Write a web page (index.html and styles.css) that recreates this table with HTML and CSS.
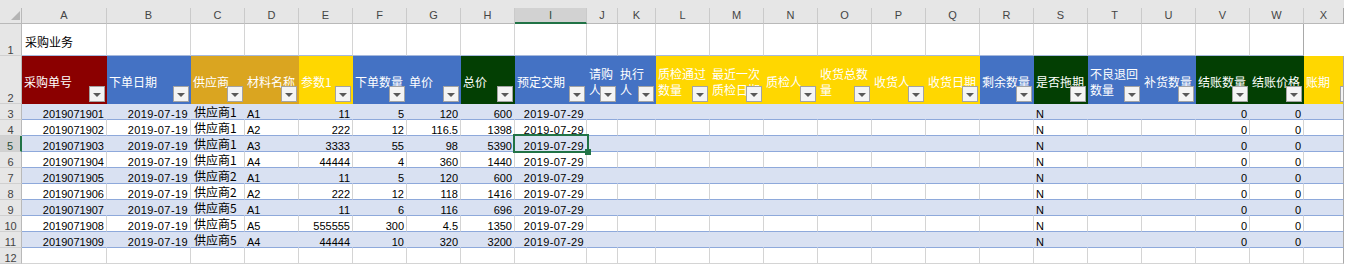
FILE: index.html
```html
<!DOCTYPE html>
<html lang="zh-CN">
<head>
<meta charset="utf-8">
<title>采购业务</title>
<link rel="stylesheet" href="styles.css">
</head>
<body>
<div class="sheet">
  <div class="row colhead">
    <div class="ch corner"></div>
    <div class="ch">A</div><div class="ch">B</div><div class="ch">C</div><div class="ch">D</div><div class="ch">E</div><div class="ch">F</div><div class="ch">G</div><div class="ch">H</div><div class="ch on">I</div><div class="ch">J</div><div class="ch">K</div><div class="ch">L</div><div class="ch">M</div><div class="ch">N</div><div class="ch">O</div><div class="ch">P</div><div class="ch">Q</div><div class="ch">R</div><div class="ch">S</div><div class="ch">T</div><div class="ch">U</div><div class="ch">V</div><div class="ch">W</div><div class="ch">X</div>
  </div>

  <div class="row r1">
    <div class="rh">1</div>
    <div class="c title">采购业务</div>
    <div class="c"></div><div class="c"></div><div class="c"></div><div class="c"></div><div class="c"></div><div class="c"></div><div class="c"></div><div class="c"></div><div class="c"></div><div class="c"></div><div class="c"></div><div class="c"></div><div class="c"></div><div class="c"></div><div class="c"></div><div class="c"></div><div class="c"></div><div class="c"></div><div class="c"></div><div class="c"></div><div class="c"></div><div class="c"></div>
  </div>

  <div class="row r2">
    <div class="rh">2</div>
    <div class="h red">采购单号<span class="fb"></span></div>
    <div class="h blue">下单日期<span class="fb"></span></div>
    <div class="h gold">供应商<span class="fb"></span></div>
    <div class="h gold">材料名称<span class="fb"></span></div>
    <div class="h yel">参数1<span class="fb"></span></div>
    <div class="h blue">下单数量<span class="fb"></span></div>
    <div class="h blue">单价<span class="fb"></span></div>
    <div class="h grn">总价<span class="fb"></span></div>
    <div class="h blue">预定交期<span class="fb"></span></div>
    <div class="h blue wrap">请购人<span class="fb"></span></div>
    <div class="h blue wrap">执行人<span class="fb"></span></div>
    <div class="h yel wrap">质检通过数量<span class="fb"></span></div>
    <div class="h yel wrap">最近一次质检日期<span class="fb"></span></div>
    <div class="h yel">质检人<span class="fb"></span></div>
    <div class="h yel wrap">收货总数量<span class="fb"></span></div>
    <div class="h yel">收货人<span class="fb"></span></div>
    <div class="h yel">收货日期<span class="fb"></span></div>
    <div class="h blue">剩余数量<span class="fb"></span></div>
    <div class="h grn">是否拖期<span class="fb"></span></div>
    <div class="h blue wrap">不良退回数量<span class="fb"></span></div>
    <div class="h blue">补货数量<span class="fb"></span></div>
    <div class="h grn">结账数量<span class="fb"></span></div>
    <div class="h grn">结账价格<span class="fb"></span></div>
    <div class="h yel">账期<span class="fb cut"></span></div>
  </div>

  <div class="row data band">
    <div class="rh">3</div>
    <div class="c n">2019071901</div><div class="c n dt">2019-07-19</div><div class="c t">供应商1</div><div class="c">A1</div><div class="c n">11</div><div class="c n">5</div><div class="c n">120</div><div class="c n">600</div><div class="c n dt">2019-07-29</div>
    <div class="c"></div><div class="c"></div>
    <div class="c"></div><div class="c"></div><div class="c"></div><div class="c"></div><div class="c"></div><div class="c"></div><div class="c"></div>
    <div class="c">N</div><div class="c"></div><div class="c"></div><div class="c n">0</div><div class="c n">0</div><div class="c"></div>
  </div>

  <div class="row data">
    <div class="rh">4</div>
    <div class="c n">2019071902</div><div class="c n dt">2019-07-19</div><div class="c t">供应商1</div><div class="c">A2</div><div class="c n">222</div><div class="c n">12</div><div class="c n">116.5</div><div class="c n">1398</div><div class="c n dt">2019-07-29</div>
    <div class="c"></div><div class="c"></div>
    <div class="c"></div><div class="c"></div><div class="c"></div><div class="c"></div><div class="c"></div><div class="c"></div><div class="c"></div>
    <div class="c">N</div><div class="c"></div><div class="c"></div><div class="c n">0</div><div class="c n">0</div><div class="c"></div>
  </div>

  <div class="row data band">
    <div class="rh on">5</div>
    <div class="c n">2019071903</div><div class="c n dt">2019-07-19</div><div class="c t">供应商1</div><div class="c">A3</div><div class="c n">3333</div><div class="c n">55</div><div class="c n">98</div><div class="c n">5390</div><div class="c n dt cur">2019-07-29<span class="sel"></span></div>
    <div class="c"></div><div class="c"></div>
    <div class="c"></div><div class="c"></div><div class="c"></div><div class="c"></div><div class="c"></div><div class="c"></div><div class="c"></div>
    <div class="c">N</div><div class="c"></div><div class="c"></div><div class="c n">0</div><div class="c n">0</div><div class="c"></div>
  </div>

  <div class="row data">
    <div class="rh">6</div>
    <div class="c n">2019071904</div><div class="c n dt">2019-07-19</div><div class="c t">供应商1</div><div class="c">A4</div><div class="c n">44444</div><div class="c n">4</div><div class="c n">360</div><div class="c n">1440</div><div class="c n dt">2019-07-29</div>
    <div class="c"></div><div class="c"></div>
    <div class="c"></div><div class="c"></div><div class="c"></div><div class="c"></div><div class="c"></div><div class="c"></div><div class="c"></div>
    <div class="c">N</div><div class="c"></div><div class="c"></div><div class="c n">0</div><div class="c n">0</div><div class="c"></div>
  </div>

  <div class="row data band">
    <div class="rh">7</div>
    <div class="c n">2019071905</div><div class="c n dt">2019-07-19</div><div class="c t">供应商2</div><div class="c">A1</div><div class="c n">11</div><div class="c n">5</div><div class="c n">120</div><div class="c n">600</div><div class="c n dt">2019-07-29</div>
    <div class="c"></div><div class="c"></div>
    <div class="c"></div><div class="c"></div><div class="c"></div><div class="c"></div><div class="c"></div><div class="c"></div><div class="c"></div>
    <div class="c">N</div><div class="c"></div><div class="c"></div><div class="c n">0</div><div class="c n">0</div><div class="c"></div>
  </div>

  <div class="row data">
    <div class="rh">8</div>
    <div class="c n">2019071906</div><div class="c n dt">2019-07-19</div><div class="c t">供应商2</div><div class="c">A2</div><div class="c n">222</div><div class="c n">12</div><div class="c n">118</div><div class="c n">1416</div><div class="c n dt">2019-07-29</div>
    <div class="c"></div><div class="c"></div>
    <div class="c"></div><div class="c"></div><div class="c"></div><div class="c"></div><div class="c"></div><div class="c"></div><div class="c"></div>
    <div class="c">N</div><div class="c"></div><div class="c"></div><div class="c n">0</div><div class="c n">0</div><div class="c"></div>
  </div>

  <div class="row data band">
    <div class="rh">9</div>
    <div class="c n">2019071907</div><div class="c n dt">2019-07-19</div><div class="c t">供应商5</div><div class="c">A1</div><div class="c n">11</div><div class="c n">6</div><div class="c n">116</div><div class="c n">696</div><div class="c n dt">2019-07-29</div>
    <div class="c"></div><div class="c"></div>
    <div class="c"></div><div class="c"></div><div class="c"></div><div class="c"></div><div class="c"></div><div class="c"></div><div class="c"></div>
    <div class="c">N</div><div class="c"></div><div class="c"></div><div class="c n">0</div><div class="c n">0</div><div class="c"></div>
  </div>

  <div class="row data">
    <div class="rh">10</div>
    <div class="c n">2019071908</div><div class="c n dt">2019-07-19</div><div class="c t">供应商5</div><div class="c">A5</div><div class="c n">555555</div><div class="c n">300</div><div class="c n">4.5</div><div class="c n">1350</div><div class="c n dt">2019-07-29</div>
    <div class="c"></div><div class="c"></div>
    <div class="c"></div><div class="c"></div><div class="c"></div><div class="c"></div><div class="c"></div><div class="c"></div><div class="c"></div>
    <div class="c">N</div><div class="c"></div><div class="c"></div><div class="c n">0</div><div class="c n">0</div><div class="c"></div>
  </div>

  <div class="row data band">
    <div class="rh">11</div>
    <div class="c n">2019071909</div><div class="c n dt">2019-07-19</div><div class="c t">供应商5</div><div class="c">A4</div><div class="c n">44444</div><div class="c n">10</div><div class="c n">320</div><div class="c n">3200</div><div class="c n dt">2019-07-29</div>
    <div class="c"></div><div class="c"></div>
    <div class="c"></div><div class="c"></div><div class="c"></div><div class="c"></div><div class="c"></div><div class="c"></div><div class="c"></div>
    <div class="c">N</div><div class="c"></div><div class="c"></div><div class="c n">0</div><div class="c n">0</div><div class="c"></div>
  </div>

  <div class="row">
    <div class="rh">12</div>
    <div class="c"></div><div class="c"></div><div class="c"></div><div class="c"></div><div class="c"></div><div class="c"></div><div class="c"></div><div class="c"></div><div class="c"></div><div class="c"></div><div class="c"></div><div class="c"></div><div class="c"></div><div class="c"></div><div class="c"></div><div class="c"></div><div class="c"></div><div class="c"></div><div class="c"></div><div class="c"></div><div class="c"></div><div class="c"></div><div class="c"></div><div class="c"></div>
  </div>
</div>
</body>
</html>
```

FILE: styles.css
```css
:root {
  --cols: 22px 85px 84px repeat(6, 54px) 72px 31px 38px repeat(12, 54px) 40px;
  --grid: #d4d4d4;
  --band: #d9e1f2;
  --band-line: #8ea9db;
  --sel: #217346;
}

body {
  margin: 0;
  background: #ffffff;
}

.sheet {
  width: 1344px;
  font-family: "Liberation Sans", "Noto Sans CJK SC", sans-serif;
  font-size: 11px;
  color: #000000;
}

.row {
  display: grid;
  grid-template-columns: var(--cols);
  grid-auto-rows: 16px;
}

.r1 { grid-auto-rows: 32px; }
.r2 { grid-auto-rows: 48px; }

/* column letters */
.colhead {
  padding-top: 8px;
  background: #e6e6e6;
}

.ch {
  box-sizing: border-box;
  border-right: 1px solid #cacaca;
  border-bottom: 1px solid #b9b9b9;
  text-align: center;
  line-height: 15px;
  color: #444444;
}

.ch.on {
  background: #d2d2d2;
  border-bottom: 2px solid var(--sel);
  color: #2a4d38;
}

.corner {
  display: flex;
  justify-content: flex-end;
  align-items: flex-end;
  padding: 0 1px 3px 0;
  border-right-color: #b9b9b9;
}

.corner::after {
  content: "";
  width: 0;
  height: 0;
  border-left: 9px solid transparent;
  border-bottom: 9px solid #b4b4b4;
}

/* row numbers */
.rh {
  box-sizing: border-box;
  background: #e6e6e6;
  border-right: 1px solid #b9b9b9;
  border-bottom: 1px solid #d0d0d0;
  color: #444444;
  display: flex;
  align-items: flex-end;
  justify-content: center;
  line-height: 10px;
  overflow: hidden;
}

.rh.on {
  background: #d2d2d2;
  border-right: 2px solid var(--sel);
  color: #2a4d38;
}

/* cells */
.c {
  box-sizing: border-box;
  min-width: 0;
  border-right: 1px solid var(--grid);
  border-bottom: 1px solid var(--grid);
  padding: 0 2px;
  line-height: 20px;
  white-space: nowrap;
  overflow: hidden;
}

.n { text-align: right; }
.dt { letter-spacing: 0.4px; }

.t {
  font-family: "Noto Sans CJK SC", sans-serif;
  font-size: 12px;
  line-height: 16px;
  padding-left: 3px;
}

.title {
  display: flex;
  align-items: center;
  padding: 4px 0 0 3px;
  font-family: "Noto Sans CJK SC", sans-serif;
  font-size: 12px;
  line-height: 16px;
  overflow: visible;
}

.r1 .c { border-bottom-color: #a6b9dd; }

.data .c { border-bottom-color: var(--band-line); }

.band .c {
  background: var(--band);
  border-right-color: transparent;
}

.row > :last-child { border-right: 1px solid #a9a9a9; }

/* table header row */
.h {
  box-sizing: border-box;
  min-width: 0;
  position: relative;
  display: flex;
  align-items: center;
  padding: 4px 2px 0;
  font-family: "Noto Sans CJK SC", sans-serif;
  font-size: 12px;
  line-height: 16px;
  color: #ffffff;
  white-space: nowrap;
  overflow: hidden;
}

.h.wrap { white-space: normal; }

.red  { background: #8b0000; }
.blue { background: #4472c4; }
.gold { background: #daa520; }
.yel  { background: #ffd700; }
.grn  { background: #033f03; }

/* filter drop-down button */
.fb {
  position: absolute;
  right: 2px;
  bottom: 2px;
  width: 16px;
  height: 16px;
  box-sizing: border-box;
  background: #f4f4f4;
  border: 1px solid #a3a3a3;
  display: flex;
  align-items: center;
  justify-content: center;
}

.fb::after {
  content: "";
  width: 0;
  height: 0;
  margin-top: 1px;
  border-left: 4px solid transparent;
  border-right: 4px solid transparent;
  border-top: 4px solid #595959;
}

.fb.cut {
  right: auto;
  left: 36px;
}

/* active cell */
.cur {
  position: relative;
  z-index: 2;
  overflow: visible;
}

.sel {
  position: absolute;
  top: -2px;
  left: -2px;
  right: -3px;
  bottom: -2px;
  border: 2px solid var(--sel);
}

.sel::after {
  content: "";
  position: absolute;
  right: -4px;
  bottom: -4px;
  width: 6px;
  height: 6px;
  background: var(--sel);
}
```
